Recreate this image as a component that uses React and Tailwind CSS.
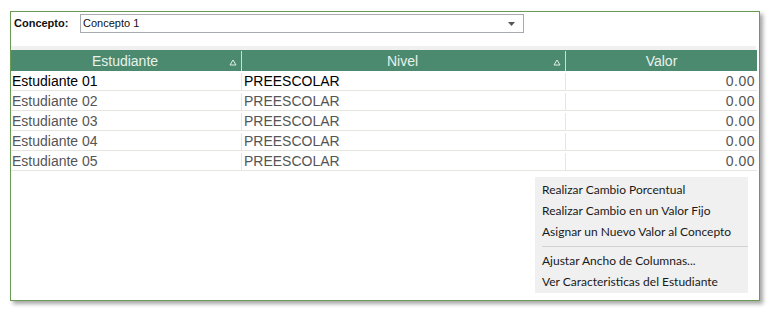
const rows = [
  { name: "Estudiante 01", nivel: "PREESCOLAR", valor: "0.00", active: true },
  { name: "Estudiante 02", nivel: "PREESCOLAR", valor: "0.00" },
  { name: "Estudiante 03", nivel: "PREESCOLAR", valor: "0.00" },
  { name: "Estudiante 04", nivel: "PREESCOLAR", valor: "0.00" },
  { name: "Estudiante 05", nivel: "PREESCOLAR", valor: "0.00" },
];

function SortMark() {
  return (
    <svg width="8" height="7" viewBox="0 0 8 7" className="shrink-0 mt-[3px]">
      <path d="M4 1 L7 6 L1 6 Z" fill="none" stroke="#dfeee6" strokeWidth="1" />
    </svg>
  );
}

function MenuItem({ children }) {
  return (
    <div className="h-[21px] flex items-center pl-[7px] text-[12px] text-[#1a1a1a]">
      {children}
    </div>
  );
}

export default function App() {
  return (
    <div className="w-[773px] h-[314px] bg-white relative overflow-hidden pt-[11px] pl-[10px] font-['Liberation_Sans',Arial,sans-serif]">
      <div className="w-[750px] h-[290px] border border-[#6b9a55] bg-white shadow-[3px_3px_4px_rgba(0,0,0,0.35)] flex flex-col">
        {/* filtro */}
        <div className="h-[34px] flex items-start pt-[2px] pl-[3px]">
          <span className="text-[11px] font-bold text-[#111] w-[66px] h-[19px] flex items-center">Concepto:</span>
          <div className="w-[444px] h-[19px] border border-[#a7abb0] flex items-center justify-between pl-[2px] pr-[8px]">
            <span className="text-[11px] text-[#111]">Concepto 1</span>
            <svg width="7" height="4" viewBox="0 0 7 4">
              <path d="M0 0 L7 0 L3.5 4 Z" fill="#555" />
            </svg>
          </div>
        </div>
        <div className="h-[4px] bg-[#f0f0f0] mr-[3px]" />

        {/* tabla */}
        <div className="mr-[2px] text-[14px]">
          <div className="h-[21px] bg-[#4b8a6f] flex text-[#e8f2ec] pt-[1px]">
            <div className="w-[231px] flex items-center border-r border-[#cfdcd4] pr-[4px]">
              <span className="flex-1 text-center pl-[10px]">Estudiante</span>
              <SortMark />
            </div>
            <div className="w-[324px] flex items-center border-r border-[#cfdcd4] pr-[4px]">
              <span className="flex-1 text-center pl-[10px]">Nivel</span>
              <SortMark />
            </div>
            <div className="flex-1 flex items-center justify-center">Valor</div>
          </div>
          {rows.map((r) => (
            <div
              key={r.name}
              className={`h-[20px] flex border-b border-[#e6e6df] pt-[2px] ${r.active ? "text-black" : "text-[#555]"}`}
            >
              <div className="w-[231px] pl-[1px] flex items-center border-r border-[#e6e6df]">{r.name}</div>
              <div className="w-[324px] pl-[2px] flex items-center border-r border-[#e6e6df]">{r.nivel}</div>
              <div className="flex-1 flex items-center justify-end pr-[2px] tracking-[0.5px] text-[#555]">{r.valor}</div>
            </div>
          ))}
        </div>
      </div>

      {/* menu contextual */}
      <div className="absolute left-[535px] top-[177px] w-[213px] h-[116px] bg-[#f0f0f0] pt-[2px] font-['Lato',sans-serif]">
        <MenuItem>Realizar Cambio Porcentual</MenuItem>
        <MenuItem>Realizar Cambio en un Valor Fijo</MenuItem>
        <MenuItem>Asignar un Nuevo Valor al Concepto</MenuItem>
        <div className="h-[8px] flex items-center pl-[7px]">
          <div className="h-px w-full bg-[#d2d2d2]" />
        </div>
        <MenuItem>Ajustar Ancho de Columnas...</MenuItem>
        <MenuItem>Ver Caracteristicas del Estudiante</MenuItem>
      </div>
    </div>
  );
}
